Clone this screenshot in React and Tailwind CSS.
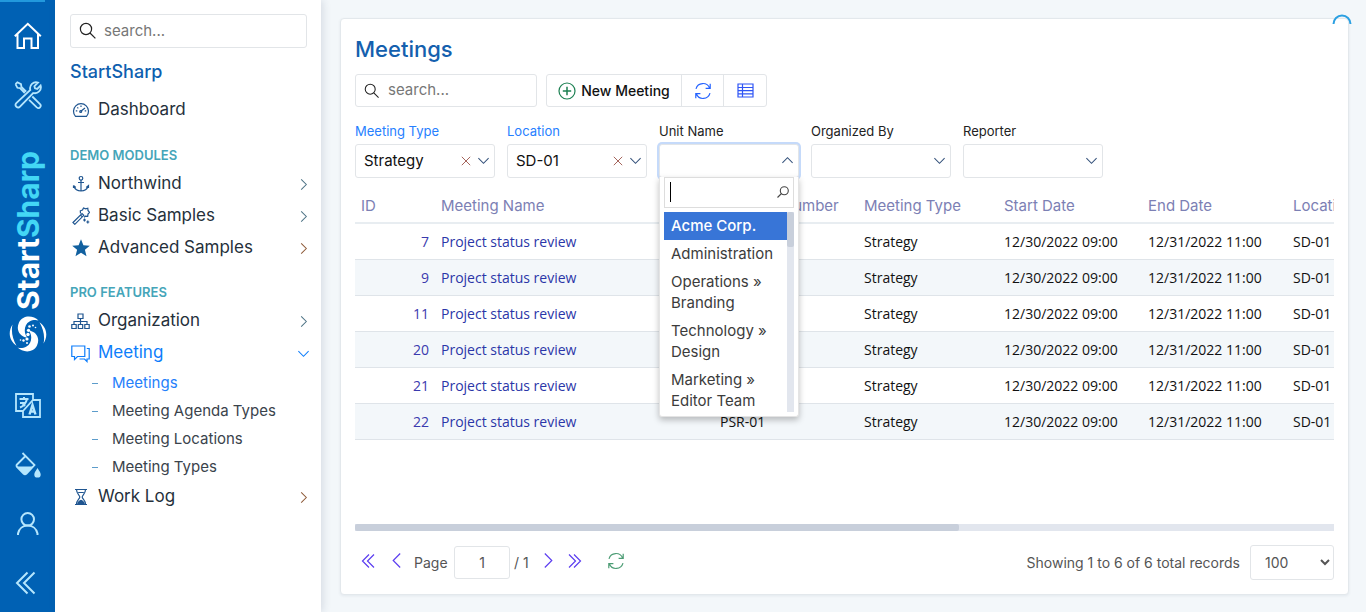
import React, { useState } from "react";

const Svg = ({ size = 18, box = 24, sw = 1.5, className = "", children }) => (
  <svg
    width={size}
    height={size}
    viewBox={`0 0 ${box} ${box}`}
    fill="none"
    stroke="currentColor"
    strokeWidth={sw}
    className={`shrink-0 ${className}`}
    aria-hidden="true"
  >
    {children}
  </svg>
);

const SearchIcon = ({ className = "text-[#222]", size = 18 }) => (
  <Svg size={size} box={18} sw={1.2} className={className}>
    <circle cx="7" cy="7" r="5.6" />
    <path d="M11 11 16.4 16.4" />
  </Svg>
);

const Chevron = ({ dir = "down", size = 14, className = "" }) => {
  const paths = {
    down: "M1.5 4.5 7 10 12.5 4.5",
    up: "M1.5 9.5 7 4 12.5 9.5",
    right: "M4.5 1.5 10 7 4.5 12.5",
    left: "M9.5 0.5 3 7 9.5 13.5",
    next: "M4.5 0.5 11 7 4.5 13.5",
  };
  return (
    <Svg size={size} box={14} sw={1.1} className={className}>
      <path d={paths[dir]} />
    </Svg>
  );
};

const RefreshIcon = ({ className }) => (
  <Svg size={18} box={18} sw={1.2} className={className}>
    <path d="M2 6.8A7.2 7.2 0 0 1 15.6 6M16.2 1.8v4.6h-4.6M16 11.2A7.2 7.2 0 0 1 2.4 12M1.8 16.2v-4.6h4.6" />
  </Svg>
);

const HomeIcon = () => (
  <Svg size={28} box={28} sw={2}>
    <path d="M.8 14.3 13.800 1.800 26.800 14.300M3.500 12v14h6.500V16.500h7.500V26H24V12" />
  </Svg>
);

const ToolsIcon = () => (
  <Svg size={28} box={28} sw={1.8}>
    <path d="M1.500 3.200 3.400 1.300 7 3.200 7.400 5.800 12.200 10.600M1.500 3.200 3.400 6.800 6 7.200 10.800 12" />
    <path d="M16.300 8.900A6 6 0 0 1 24 1.600L20.400 5.200 21 7.300 23.200 7.900 26.600 4.500A6 6 0 0 1 19.200 12L6 25.600A2.500 2.500 0 0 1 2.300 22.200Z" />
    <path d="M18.300 15.500 26 23.100A2.300 2.300 0 0 1 22.800 26.400L15.100 18.800" />
  </Svg>
);

const LanguageIcon = () => (
  <Svg size={26} box={26} sw={1.8}>
    <path d="M8 18H1V1h17v6M8 18 18 7h7v17H8Z" />
    <path d="M4.500 6h9M9 4v2M5 10h5M12 6C11 10 9 13 5 14.500M7 9.500l3 3.500" strokeWidth="2" />
    <path d="M14.500 21.500 17.500 12 20.500 21.500M16 18.500h3.500" strokeWidth="2.400" />
  </Svg>
);

const PaintIcon = () => (
  <Svg size={26} box={26} sw={1.8}>
    <path d="M7.500 1 19.500 13 11.500 21.500Q10 23 8.500 21.500L2 15Q1 13.500 2 12.500L10 4.500" />
    <path d="M2 14.500H18.500L11.500 21.800Q10 23 8.500 21.800Z" fill="currentColor" stroke="none" />
    <path d="M22.500 16C20.500 19.500 19.300 20.700 19.300 22.400a3.200 3.200 0 0 0 6.400 0C25.700 20.700 24.500 19.500 22.500 16Z" fill="currentColor" stroke="none" />
  </Svg>
);

const UserIcon = () => (
  <Svg size={26} box={26} sw={2}>
    <circle cx="12.700" cy="8.300" r="6.300" />
    <path d="M3 24v-1.500C4 17.500 8 14.600 12.700 14.600S21.500 17.500 22.500 22.500V24" />
  </Svg>
);

const CollapseIcon = () => (
  <Svg size={26} box={26} sw={2}>
    <path d="M12.500 2.500 2 13 12.500 23.500M19.500 2.500 9 13 19.500 23.500" />
  </Svg>
);

const swirlArm =
  "M29.500 5.500C24.500 .5 14 -.5 10 7.500C6.500 15 11 21.500 18 22.500C14.500 17.500 15 9.500 20.500 6.500C23.500 4.800 27 4.600 29.500 5.500Z";
const swirlRim = "M3.500 9.500C-1.500 17.500 .5 26 7.500 30.800C3.800 24.500 1.800 16.500 3.500 9.500Z";

const SwirlLogo = () => (
  <svg width="38" height="38" viewBox="0 0 38 38" fill="#fff" aria-hidden="true">
    <path d={swirlArm} />
    <path d={swirlRim} />
    <g transform="rotate(180 19 19)">
      <path d={swirlArm} />
      <path d={swirlRim} />
    </g>
    <circle cx="20.500" cy="11.500" r="1.300" />
    <circle cx="24" cy="10.500" r="1" />
    <circle cx="26.500" cy="12.500" r=".8" />
    <circle cx="19.500" cy="15.300" r="1.600" />
    <circle cx="19" cy="19.500" r="1.700" />
    <circle cx="18" cy="24" r="1.600" />
    <circle cx="14.500" cy="25.500" r="1.200" />
    <circle cx="11.500" cy="25" r=".8" />
    <circle cx="18" cy="28" r="1" />
  </svg>
);

const GaugeIcon = () => (
  <Svg size={18} box={18} sw={1.200}>
    <path d="M3.500 15.300A7.500 7.500 0 1 1 14.500 15.300Z" />
    <path d="M9 4.500v1.500M3.800 9.800h1.500M12.700 9.800h1.500M5.300 6.300l1 1M8.500 10.500 13 7" />
    <circle cx="8.700" cy="10.500" r="1" />
  </Svg>
);
const AnchorIcon = () => (
  <Svg size={18} box={18} sw={1.200}>
    <circle cx="9" cy="3.300" r="1.800" />
    <path d="M9 5.100V16M6 7.500h6M1.500 13V10.500M1.500 10.500 3.800 12.500M1.800 11C3 14.500 6 16 9 16S15 14.500 16.200 11M16.500 13V10.500L14.200 12.500" />
  </Svg>
);
const WandIcon = () => (
  <Svg size={18} box={18} sw={1.200}>
    <path d="M1 15.500 10 6.500 11.800 8.300 2.800 17.300ZM8.500 8l1.800 1.800" />
    <path d="M8.500 6.500 8.300 3.800 10.500 3 11.500 1 13.600 1.800 15.800 1.200 16 3.500 17.500 5.300 16 7 15.700 9.300 13.400 9.200 12 10.200" />
    <path d="M12.500 11.500v3M11 13h3M15.800 13.500v3M14.300 15h3" />
  </Svg>
);
const StarIcon = () => (
  <svg width="18" height="18" viewBox="0 0 18 18" fill="#11609f" className="shrink-0" aria-hidden="true">
    <path d="M9 .3 11.400 6.300 17.800 6.700 12.900 10.800 14.500 17.200 9 13.700 3.500 17.200 5.100 10.800.2 6.700 6.600 6.300Z" />
  </svg>
);
const OrgIcon = () => (
  <Svg size={19} box={19} sw={1.200}>
    <path d="M7 2h5v4.500H7ZM.8 12.500h4.400v4H.8ZM7.300 12.500h4.400v4H7.300ZM13.800 12.500h4.400v4h-4.400ZM9.500 6.500v6M3 12.500V9.500h13v3" />
  </Svg>
);
const ChatIcon = () => (
  <Svg size={19} box={19} sw={1.200}>
    <path d="M.8 2h13v10.500H6.500L3.500 15.500V12.500H.8ZM15.800 4.500h2.400V15H16v2.500L13.500 15H8.500" />
  </Svg>
);
const HourglassIcon = () => (
  <Svg size={18} box={18} sw={1.200}>
    <path d="M3 1.500h12M3 16.500h12M4.500 1.500C4.500 6 7.800 7 7.800 9S4.500 12 4.500 16.500M13.500 1.500C13.500 6 10.200 7 10.200 9S13.500 12 13.500 16.500M6.200 4.500h5.600" />
    <path d="M5 16.500C5.300 13.500 7.500 12.500 9 11.800C10.500 12.500 12.700 13.500 13 16.500Z" fill="currentColor" stroke="none" />
  </Svg>
);

const RailButton = ({ label, children, active }) => (
  <button
    type="button"
    aria-label={label}
    className={`flex h-[59px] w-full shrink-0 items-center justify-center ${active ? "text-white" : "text-[#b5e6fd]"}`}
  >
    {children}
  </button>
);

const NavItem = ({ icon, label, chevron, active, chevronClass = "text-[#4d7385]" }) => (
  <a
    href="#"
    className={`-mr-[3px] flex h-8 items-center text-[17px] ${active ? "text-[#0d7dfb]" : "text-[#25303b]"}`}
  >
    <span className={`flex w-[21px] justify-center ${active ? "" : "text-[#1f5590]"}`}>{icon}</span>
    <span className="ml-[7px] flex-1">{label}</span>
    {chevron && <Chevron dir={chevron} size={13} className={active ? "text-[#0d7dfb]" : chevronClass} />}
  </a>
);

const SubItem = ({ label, active }) => (
  <a
    href="#"
    className={`flex h-7 items-center pl-[22px] text-[15px] ${active ? "text-[#2580fb]" : "text-[#3a434c]"}`}
  >
    <span className="mr-[14px] h-px w-[6px] bg-[#5c9ccb]" />
    {label}
  </a>
);

const Section = ({ children, className }) => (
  <h3 className={`flex h-6 items-center text-[13px] font-semibold text-[#45a5b9] ${className}`}>{children}</h3>
);

const field = "rounded-[3px] border border-[#e2e5e8] bg-white";

const Filter = ({ id, label, value, active, children }) => (
  <div className="relative w-[140px]">
    <label htmlFor={id} className={`block h-5 text-[13px] leading-5 ${active ? "text-[#2680ff]" : "text-[#222]"}`}>
      {label}
    </label>
    <div className="relative mt-[3px]">
      <select
        id={id}
        defaultValue={value}
        className={`block h-[34px] w-full appearance-none px-2 text-[15px] text-[#111] ${field} ${children ? "ring-2 ring-[#c5dafa]" : ""}`}
      >
        <option>{value}</option>
      </select>
      {value && (
        <button type="button" aria-label={`Clear ${label}`} className="absolute top-[12px] right-[24px] text-[#a5655c]">
          <Svg size={10} box={10} sw={1}>
            <path d="M.8.800 9.200 9.200M9.200.8.8 9.200" />
          </Svg>
        </button>
      )}
      <Chevron
        dir={children ? "up" : "down"}
        size={13}
        className="pointer-events-none absolute top-[10px] right-[5px] text-[#33507a]"
      />
    </div>
    {children}
  </div>
);

const units = ["Acme Corp.", "Administration", "Operations » Branding", "Technology » Design", "Marketing » Editor Team"];

const UnitMenu = () => (
  <div className="absolute top-[56px] left-0 z-10 w-full rounded-b-[3px] border border-t-0 border-[#e4e4e4] bg-white px-1 pb-1 shadow-[0_3px_6px_rgba(0,0,0,0.25)]">
    <div className="relative">
      <input aria-label="Search units" className="block h-[31px] w-full border border-[#ddd] pr-6 pl-2 text-[14px] outline-none" />
      <span className="absolute top-[5px] left-[6px] h-5 w-px bg-black" />
      <Svg size={12} box={12} sw={1.100} className="absolute top-[9px] right-[5px] text-[#444]">
        <circle cx="7.300" cy="4.700" r="4" />
        <path d="M4.500 7.500.5 11.500" />
      </Svg>
    </div>
    <div className="mt-1 flex">
      <ul role="listbox" aria-label="Unit Name" className="h-[200px] flex-1 overflow-hidden">
        {units.map((u, i) => (
          <li
            key={u}
            role="option"
            aria-selected={i === 0}
            className={`px-[7px] pt-[3px] pb-1 text-[15px] leading-[21px] ${i === 0 ? "bg-[#3875d7] font-medium text-white" : "text-[#3c3c3c]"}`}
          >
            {u}
          </li>
        ))}
      </ul>
      <div className="w-[7px] bg-[#e2e6ee]">
        <div className="h-[35px] rounded-[2px] bg-[#c8cfdb]" />
      </div>
    </div>
  </div>
);

const rows = [7, 9, 11, 20, 21, 22];
const columns = [
  ["ID", "w-[80px]"],
  ["Meeting Name", "w-[279px]"],
  ["Meeting Number", "w-[144px]"],
  ["Meeting Type", "w-[140px]"],
  ["Start Date", "w-[144px]"],
  ["End Date", "w-[145px]"],
  ["Location", ""],
];

const Pager = ({ label, children }) => (
  <button type="button" aria-label={label} className="mb-1 flex h-7 w-[28px] items-center justify-center text-[#5b3df0]">
    {children}
  </button>
);

export default function App() {
  const [page, setPage] = useState("1");
  return (
    <div className="flex min-h-screen bg-[#f3f7fa] font-[Inter,'Open_Sans',sans-serif]">
      <nav aria-label="Main" className="relative flex w-[55px] shrink-0 flex-col bg-[#0061b4] pt-[6px]">
        <div className="absolute top-0 left-0 h-[2px] w-[45px] bg-[#2299dd]" />
        <RailButton label="Home" active><HomeIcon /></RailButton>
        <RailButton label="Tools"><ToolsIcon /></RailButton>
        <div className="flex flex-1 flex-col items-center justify-end gap-[5px] pb-[23px]">
          <div className="rotate-180 text-[30px] leading-[36px] font-bold text-white [writing-mode:vertical-rl]">
            Start<span className="text-[#43d7f5]">Sharp</span>
          </div>
          <SwirlLogo />
        </div>
        <RailButton label="Language"><LanguageIcon /></RailButton>
        <RailButton label="Theme"><PaintIcon /></RailButton>
        <RailButton label="Account"><UserIcon /></RailButton>
        <RailButton label="Collapse sidebar"><CollapseIcon /></RailButton>
      </nav>

      <aside className="z-10 w-[266px] shrink-0 bg-white pt-[14px] pr-[14px] pl-[15px] shadow-[2px_0_8px_rgba(40,60,90,0.14)]">
        <label className={`flex h-[34px] items-center pl-2 ${field}`}>
          <SearchIcon />
          <input aria-label="Search menu" placeholder="search..." className="ml-[7px] min-w-0 flex-1 text-[15px] outline-none placeholder:text-[#777]" />
        </label>
        <h2 className="mt-3 text-[18px] leading-6 font-medium text-[#0f5faf]">StartSharp</h2>
        <div className="mt-[10px]"><NavItem icon={<GaugeIcon />} label="Dashboard" /></div>
        <Section className="mt-[18px]">DEMO MODULES</Section>
        <NavItem icon={<AnchorIcon />} label="Northwind" chevron="right" />
        <NavItem icon={<WandIcon />} label="Basic Samples" chevron="right" />
        <NavItem icon={<StarIcon />} label="Advanced Samples" chevron="right" chevronClass="text-[#8d5a38]" />
        <Section className="mt-[17px]">PRO FEATURES</Section>
        <NavItem icon={<OrgIcon />} label="Organization" chevron="right" />
        <NavItem icon={<ChatIcon />} label="Meeting" chevron="down" active />
        <SubItem label="Meetings" active />
        <SubItem label="Meeting Agenda Types" />
        <SubItem label="Meeting Locations" />
        <SubItem label="Meeting Types" />
        <NavItem icon={<HourglassIcon />} label="Work Log" chevron="right" chevronClass="text-[#8d5a38]" />
      </aside>

      <main className="flex min-w-0 flex-1 flex-col pt-[18px] pr-[17px] pb-[17px] pl-[19px]">
        <section className="relative flex flex-1 flex-col rounded-[4px] border border-[#e3e8ec] bg-white px-[14px] pt-[15px] pb-[14px] shadow-[0_1px_3px_rgba(40,60,90,0.08)]">
          <svg width="20" height="11" viewBox="0 0 20 11" className="absolute top-[-5px] right-[-4px]" aria-hidden="true">
            <path d="M1.500 10A8.500 8.500 0 0 1 18.500 10" fill="none" stroke="#2ba0e2" strokeWidth="2" />
          </svg>
          <h1 className="text-[22px] leading-[30px] font-medium text-[#1460ae]">Meetings</h1>

          <div className="mt-[10px] flex gap-[9px]">
            <label className={`flex h-[33px] w-[182px] items-center pl-2 ${field}`}>
              <SearchIcon size={16} />
              <input aria-label="Search meetings" placeholder="search..." className="ml-2 min-w-0 flex-1 text-[15px] outline-none placeholder:text-[#777]" />
            </label>
            <div className={`flex h-[33px] divide-x divide-[#e2e5e8] ${field}`}>
              <button type="button" className="flex w-[135px] items-center justify-center gap-[5px] text-[14px] font-medium text-[#111]">
                <Svg size={18} box={18} sw={1.200} className="text-[#1c8052]">
                  <circle cx="9" cy="9" r="8" />
                  <path d="M9 4.800v8.400M4.800 9h8.400" strokeWidth="1.500" />
                </Svg>
                New Meeting
              </button>
              <button type="button" aria-label="Refresh" className="flex w-[42px] items-center justify-center">
                <RefreshIcon className="text-[#2563ff]" />
              </button>
              <button type="button" aria-label="Choose columns" className="flex w-[42px] items-center justify-center">
                <Svg size={17} box={17} sw={1.200} className="text-[#2f55f5]">
                  <path d="M1 2h15v13H1ZM1 5.500h15M1 8.700h15M1 11.900h15M5.500 2v13" />
                </Svg>
              </button>
            </div>
          </div>

          <div className="mt-[14px] flex gap-3">
            <Filter id="type" label="Meeting Type" value="Strategy" active />
            <Filter id="location" label="Location" value="SD-01" active />
            <Filter id="unit" label="Unit Name" value=""><UnitMenu /></Filter>
            <Filter id="organizer" label="Organized By" value="" />
            <Filter id="reporter" label="Reporter" value="" />
          </div>

          <div className="mt-[11px] flex-1 overflow-hidden">
            <table className="w-[1587px] table-fixed border-collapse">
              <thead>
                <tr className="h-[34px] border-b-2 border-[#e8edf1] text-left text-[15px] text-[#7c80b4]">
                  {columns.map(([name, width]) => (
                    <th key={name} className={`px-[6px] pt-[2px] font-normal ${width}`}>{name}</th>
                  ))}
                </tr>
              </thead>
              <tbody className="font-['Open_Sans',sans-serif] text-[14px] text-[#111]">
                {rows.map((id) => (
                  <tr key={id} className="h-9 border-b border-[#dfe4e9] even:bg-[#f3f7fa]">
                    <td className="px-[6px] text-right"><a href="#" className="text-[#3a3aae]">{id}</a></td>
                    <td className="px-[6px]"><a href="#" className="text-[#2b36a8]">Project status review</a></td>
                    <td className="px-[6px]">PSR-01</td>
                    <td className="px-[6px]">Strategy</td>
                    <td className="px-[6px]">12/30/2022 09:00</td>
                    <td className="px-[6px]">12/31/2022 11:00</td>
                    <td className="px-[6px]">SD-01</td>
                  </tr>
                ))}
              </tbody>
            </table>
          </div>
          <div className="h-[7px] bg-[#e2e6ee]">
            <div className="h-full w-[61.7%] rounded-[2px] bg-[#c8cfdb]" />
          </div>

          <div className="mt-[14px] flex h-[35px] items-center text-[14px] text-[#555]">
            <Pager label="First page">
              <Svg size={16} box={16} sw={1.200}><path d="M8 1.500 1.500 8 8 14.500M13 1.500 6.500 8 13 14.500" /></Svg>
            </Pager>
            <Pager label="Previous page"><Chevron dir="left" size={15} /></Pager>
            <label htmlFor="page" className="ml-[3px] w-[40px]">Page</label>
            <input id="page" value={page} onChange={(e) => setPage(e.target.value)} className={`h-[33px] w-[56px] text-center ${field}`} />
            <span className="ml-1 w-[19px]">/ 1</span>
            <Pager label="Next page"><Chevron dir="next" size={15} /></Pager>
            <Pager label="Last page">
              <Svg size={16} box={16} sw={1.200}><path d="M2 1.500 8.500 8 2 14.500M7 1.500 13.500 8 7 14.500" /></Svg>
            </Pager>
            <button type="button" aria-label="Reload records" className="mb-1 ml-[18px]"><RefreshIcon className="text-[#4d9d75]" /></button>
            <span className="ml-auto">Showing 1 to 6 of 6 total records</span>
            <select aria-label="Rows per page" defaultValue="100" className={`ml-[10px] h-[35px] w-[84px] px-[10px] ${field}`}>
              <option>100</option>
            </select>
          </div>
        </section>
      </main>
    </div>
  );
}
